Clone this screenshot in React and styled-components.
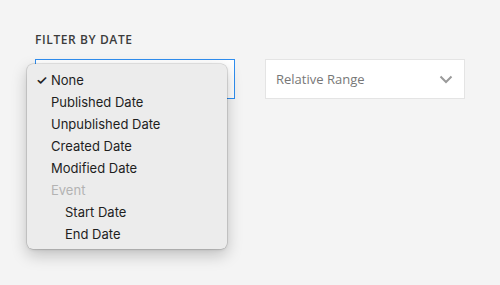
import React from "react";
import styled, { createGlobalStyle } from "styled-components";

const Global = createGlobalStyle`
  html, body { margin: 0; padding: 0; background: #f4f4f4; }
  body { font-family: "Open Sans", "Liberation Sans", sans-serif; }
`;

const Page = styled.div`
  padding: 32px 35px 0;
  height: 285px;
  box-sizing: border-box;
`;

const Label = styled.div`
  font-family: "Open Sans", Inter, sans-serif;
  font-weight: 600;
  font-size: 12px;
  line-height: 15px;
  letter-spacing: 0.6px;
  color: #3c3c3c;
  text-transform: uppercase;
  margin-bottom: 12px;
`;

const Row = styled.div`
  display: flex;
  gap: 30px;
`;

const SelectBox = styled.div`
  position: relative;
  width: 200px;
  height: 40px;
  box-sizing: border-box;
  background: #fff;
  border: 1px solid ${(p) => (p.$focused ? "#2f8ef0" : "#e4e4e4")};
  display: flex;
  align-items: center;
  justify-content: space-between;
  padding: 0 11px 0 10px;
  font-size: 13px;
  color: #777;
`;

const Chevron = () => (
  <svg width="14" height="9" viewBox="0 0 14 9">
    <path d="M1.5 1.5 L7 7 L12.5 1.5" fill="none" stroke="#9a9a9a" strokeWidth="2" />
  </svg>
);

const Menu = styled.div`
  position: absolute;
  left: -9px;
  top: 4px;
  width: 200px;
  box-sizing: border-box;
  padding: 5px 0 4px;
  background: #ececec;
  border-radius: 6px;
  box-shadow: 0 0 0 0.5px rgba(0, 0, 0, 0.18), 0 6px 16px rgba(0, 0, 0, 0.22),
    0 1px 3px rgba(0, 0, 0, 0.1);
  font-family: Inter, "Noto Sans", sans-serif;
  font-size: 13px;
  z-index: 2;
`;

const Item = styled.div`
  position: relative;
  height: 22px;
  line-height: 22px;
  padding-left: ${(p) => (p.$indent ? 38 : 24)}px;
  color: ${(p) => (p.$disabled ? "#b3b3b3" : "#1e1e1e")};
  white-space: nowrap;
`;

const Check = styled.span`
  position: absolute;
  left: 9px;
  top: 0;
  font-size: 13px;
  font-weight: 600;
`;

const items = [
  { label: "None", checked: true },
  { label: "Published Date" },
  { label: "Unpublished Date" },
  { label: "Created Date" },
  { label: "Modified Date" },
  { label: "Event", disabled: true },
  { label: "Start Date", indent: true },
  { label: "End Date", indent: true },
];

export default function App() {
  return (
    <>
      <Global />
      <Page>
        <Label>Filter by date</Label>
        <Row>
          <SelectBox $focused>
            <Menu>
              {items.map((it) => (
                <Item key={it.label} $indent={it.indent} $disabled={it.disabled}>
                  {it.checked && <Check>✓</Check>}
                  {it.label}
                </Item>
              ))}
            </Menu>
          </SelectBox>
          <SelectBox>
            <span>Relative Range</span>
            <Chevron />
          </SelectBox>
        </Row>
      </Page>
    </>
  );
}
